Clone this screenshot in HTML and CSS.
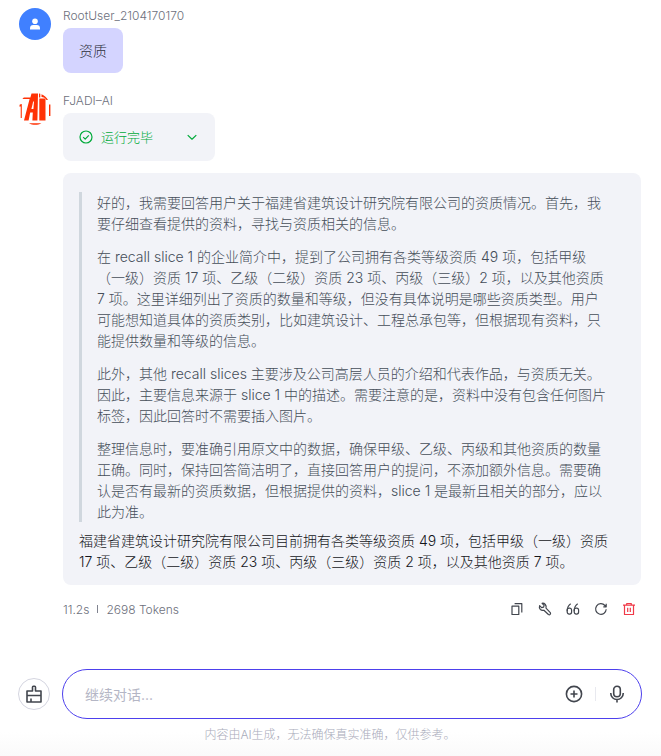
FILE: index.html
```html
<!DOCTYPE html>
<html lang="zh-CN">
<head>
    <meta charset="UTF-8">
    <meta name="viewport" content="width=device-width, initial-scale=1">
    <title>FJADI-AI</title>
    <link rel="stylesheet" href="styles.css">
</head>

<body>
    <main class="chat">
        <section class="message">
            <svg class="avatar" viewBox="0 0 32 32" aria-hidden="true">
                <circle cx="16" cy="16" r="16" fill="#4080ff"/>
                <circle cx="16" cy="13.3" r="2.8" fill="#fff"/>
                <path d="M11 21.5v-1.2c0-2 1.3-3.2 3.2-3.2h3.6c1.9 0 3.2 1.2 3.2 3.2v1.2z" fill="#fff"/>
            </svg>
            <div class="content">
                <div class="name">RootUser_2104170170</div>
                <div class="bubble question">资质</div>
            </div>
        </section>

        <section class="message">
            <svg class="avatar" viewBox="0 0 32 32" aria-hidden="true">
                <g fill="#ff3205">
                    <path d="M12.5.6H19L18.4 27.500h-5l.4-8h-2.600l-1.600 8H5L10.600 6H3.400L4.800 4.600h6.600z"/>
                    <path d="M20 .5l1.300.2v3.800H20zM20.300 5.500h6.200v22h-6.200z"/>
                    <path d="M22.500 1.200c2.700 1 4.900 3 6.500 5.800h-1.500C26.500 5 24.500 4 22.500 4z"/>
                    <path d="M.8 11.500l2-.5v14H1.700V13.500H.3zM30 11.500h1.400V23H30zM10 30.300h12.400c-3.600 2-8.800 2-12.400 0z"/>
                </g>
                <path d="M14.200 8.500h.8l-.6 7.500h-2z" fill="#fff"/>
            </svg>
            <div class="content">
                <div class="name">FJADI–AI</div>
                <button class="status" type="button" aria-expanded="false">
                    <svg class="icon" viewBox="0 0 14 14" aria-hidden="true">
                        <circle cx="7" cy="7" r="6"/>
                        <path d="M4.2 7.1l2 2 3.6-3.7"/>
                    </svg>
                    <span>运行完毕</span>
                    <svg class="icon arrow" viewBox="0 0 14 14" aria-hidden="true">
                        <path d="M2.7 5.1L7 9.2l4.3-4.1"/>
                    </svg>
                </button>

                <div class="bubble answer">
                    <blockquote class="thinking">
                        <p>好的，我需要回答用户关于福建省建筑设计研究院有限公司的资质情况。首先，我要仔细查看提供的资料，寻找与资质相关的信息。</p>
                        <p>在 recall slice 1 的企业简介中，提到了公司拥有各类等级资质 49 项，包括甲级（一级）资质 17 项、乙级（二级）资质 23 项、丙级（三级）2 项，以及其他资质 7 项。这里详细列出了资质的数量和等级，但没有具体说明是哪些资质类型。用户可能想知道具体的资质类别，比如建筑设计、工程总承包等，但根据现有资料，只能提供数量和等级的信息。</p>
                        <p>此外，其他 recall slices 主要涉及公司高层人员的介绍和代表作品，与资质无关。因此，主要信息来源于 slice 1 中的描述。需要注意的是，资料中没有包含任何图片标签，因此回答时不需要插入图片。</p>
                        <p>整理信息时，要准确引用原文中的数据，确保甲级、乙级、丙级和其他资质的数量正确。同时，保持回答简洁明了，直接回答用户的提问，不添加额外信息。需要确认是否有最新的资质数据，但根据提供的资料，slice 1 是最新且相关的部分，应以此为准。</p>
                    </blockquote>
                    <p>福建省建筑设计研究院有限公司目前拥有各类等级资质 49 项，包括甲级（一级）资质 17 项、乙级（二级）资质 23 项、丙级（三级）资质 2 项，以及其他资质 7 项。</p>
                </div>

                <div class="meta">
                    <span>11.2s</span>
                    <span class="meta-line"></span>
                    <span>2698 Tokens</span>
                    <div class="actions">
                        <button type="button" aria-label="复制">
                            <svg class="icon" viewBox="0 0 14 14" aria-hidden="true"><path d="M2 4.2h6.8v8.3H2zM4.6 1.6h7.2v8.8"/></svg>
                        </button>
                        <button type="button" aria-label="调试">
                            <svg class="icon" viewBox="0 0 14 14" aria-hidden="true"><path d="M4.1 1.3l2 2-.5 1.9-2 .5-2-2c-.6 1.6-.1 2.9.8 3.8 1 .9 2.3 1.1 3.5.7l4.5 4.3c1.4.8 2.7-.6 1.9-1.9L8 6.2c.4-1.4.2-2.7-.7-3.7-.9-1-2-1.5-3.2-1.2z"/></svg>
                        </button>
                        <button type="button" aria-label="引用">
                            <svg class="icon" viewBox="0 0 14 14" aria-hidden="true"><path d="M4.7 1.8C2.5 3.3 1.2 5.6 1.2 9.2M11.7 1.8C9.5 3.3 8.2 5.6 8.2 9.2"/><rect x="1.2" y="6.2" width="4.4" height="5.9" rx="2"/><rect x="8.2" y="6.2" width="4.4" height="5.9" rx="2"/></svg>
                        </button>
                        <button type="button" aria-label="重新生成">
                            <svg class="icon" viewBox="0 0 14 14" aria-hidden="true"><path d="M12.2 7.3A5.3 5.3 0 1 1 10.9 3.5l1 1.1M12.2 1.8v3H9.3"/></svg>
                        </button>
                        <button class="danger" type="button" aria-label="删除">
                            <svg class="icon" viewBox="0 0 14 14" aria-hidden="true"><path d="M1 3.2h12M4.7 3V1.5h4.6V3M2.5 3.2v9.3h9V3.2M5.7 5.7v4.4M8.3 5.7v4.4"/></svg>
                        </button>
                    </div>
                </div>
            </div>
        </section>
    </main>

    <footer class="footer">
        <form class="composer">
            <button class="clear" type="button" aria-label="清空对话">
                <svg class="icon" viewBox="0 0 18 18" aria-hidden="true"><path d="M2 6h5.5V2.2q0-.9.8-.9h1.4q.8 0 .8.9V6H16v11H2zM2 10.5h14M6 16.5v-3"/></svg>
            </button>
            <div class="input-box">
                <input type="text" placeholder="继续对话..." aria-label="继续对话">
                <button type="button" aria-label="添加">
                    <svg class="icon" viewBox="0 0 18 18" aria-hidden="true"><circle cx="9" cy="9" r="7.6"/><path d="M9 5.5v7M5.5 9h7"/></svg>
                </button>
                <span class="divider"></span>
                <button type="button" aria-label="语音输入">
                    <svg class="icon" viewBox="0 0 18 18" aria-hidden="true"><rect x="5.7" y="1.3" width="6.6" height="10.4" rx="3.3"/><path d="M2.8 8v.5a6.2 6 0 0 0 12.4 0V8M9 14.5v3"/></svg>
                </button>
            </div>
        </form>
        <p class="notice">内容由AI生成，无法确保真实准确，仅供参考。</p>
    </footer>
</body>
</html>
```
FILE: styles.css
```css
* {
    box-sizing: border-box;
}

body {
    min-height: 100vh;
    margin: 0;
    display: flex;
    flex-direction: column;
    justify-content: space-between;
    background: #fff;
    color: #14151a;
    font: 300 14px/21px Inter, "Noto Sans CJK SC", sans-serif;
    text-spacing-trim: space-all;
}

p,
blockquote {
    margin: 0;
}

button {
    display: flex;
    align-items: center;
    justify-content: center;
    padding: 0;
    border: 0;
    background: none;
    color: #42464e;
    font: inherit;
    cursor: pointer;
}

.icon {
    display: block;
    width: 14px;
    height: 14px;
    fill: none;
    stroke: currentColor;
    stroke-width: 1.2;
    stroke-linejoin: round;
}

.chat {
    display: flex;
    flex-direction: column;
    gap: 20px;
    padding: 8px 20px 0 19px;
}

.message {
    display: flex;
    gap: 12px;
}

.avatar {
    flex: none;
    width: 32px;
    height: 32px;
}

.content {
    flex: 1;
    min-width: 0;
}

.name {
    margin-bottom: 4px;
    color: #6d707c;
    font-size: 12px;
    line-height: 16px;
}

.bubble {
    padding: 12px 16px;
    border-radius: 8px;
    background: #f2f3f8;
}

.question {
    width: fit-content;
    background: #d4d4ff;
    color: #2c2e3a;
}

.status {
    width: 152px;
    height: 48px;
    gap: 8px;
    padding: 0 16px;
    border-radius: 8px;
    background: #f2f3f8;
    color: #00aa3a;
    font-size: 13px;
}

.status .arrow {
    margin-left: auto;
}

.answer {
    margin-top: 12px;
    padding: 19px 16px 13px;
}

.thinking {
    display: flex;
    flex-direction: column;
    gap: 12px;
    margin-bottom: 8px;
    padding: 0 15px;
    border-left: 3px solid #d0d7de;
    color: #454e59;
}

.meta {
    display: flex;
    align-items: center;
    gap: 8px;
    height: 20px;
    margin-top: 14px;
    color: #6d707c;
    font-size: 12px;
}

.meta-line {
    width: 1px;
    height: 8px;
    background: #80838f;
}

.actions {
    display: flex;
    gap: 4px;
    margin-left: auto;
}

.actions button {
    width: 24px;
    height: 24px;
}

.actions .danger {
    color: #f03a48;
}

.footer {
    padding: 32px 19px 12px 18px;
    background: linear-gradient(#fff 80%, #fafafa);
}

.composer {
    display: flex;
    align-items: center;
    gap: 12px;
}

.clear {
    flex: none;
    width: 32px;
    height: 32px;
    border: 1px solid #d4d5e0;
    border-radius: 50%;
}

.composer .icon {
    width: 18px;
    height: 18px;
    stroke-width: 1.6;
}

.input-box {
    display: flex;
    flex: 1;
    align-items: center;
    gap: 12px;
    height: 50px;
    padding: 0 15px 0 22px;
    border: 1px solid #4d40ed;
    border-radius: 25px;
    background: #fff;
}

.input-box input {
    flex: 1;
    min-width: 0;
    padding: 0;
    border: 0;
    outline: 0;
    background: none;
    color: inherit;
    font: inherit;
    font-weight: 400;
}

.input-box input::placeholder {
    color: #b4b6c5;
    opacity: 1;
}

.input-box button {
    flex: none;
    width: 18px;
    height: 18px;
}

.divider {
    width: 1px;
    height: 14px;
    background: #e8e9ef;
}

.notice {
    margin-top: 7px;
    color: #a9abba;
    font-size: 12px;
    line-height: 18px;
    text-align: center;
}
```
